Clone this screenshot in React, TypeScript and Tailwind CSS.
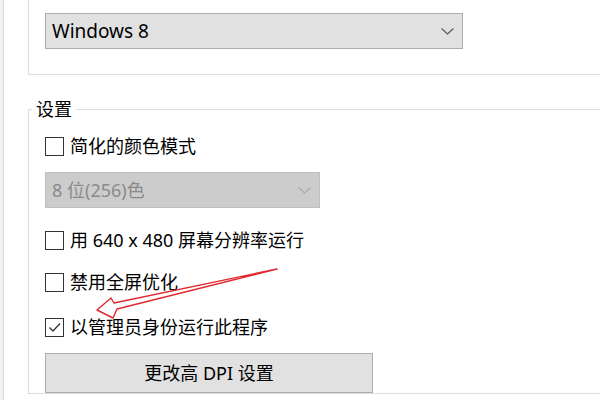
import React from "react"

const font = "font-['Noto_Sans','Noto_Sans_CJK_SC',sans-serif]"

function Checkbox({ checked = false }: { checked?: boolean }) {
  return (
    <span className="flex h-[19px] w-[19px] flex-shrink-0 items-center justify-center border border-[#333333] bg-white">
      {checked && (
        <svg width="17" height="17" viewBox="0 0 17 17">
          <polyline points="3.5,8.5 7,12 14,4.5" fill="none" stroke="#333333" strokeWidth="1.3" />
        </svg>
      )}
    </span>
  )
}

function Chevron({ color }: { color: string }) {
  return (
    <svg width="13" height="7" viewBox="0 0 13 7">
      <polyline points="0.5,0.5 6.5,6 12.5,0.5" fill="none" stroke={color} strokeWidth="1.1" />
    </svg>
  )
}

function CheckRow({ label, checked, className }: { label: string; checked?: boolean; className: string }) {
  return (
    <div className={`flex h-[24px] items-center gap-[6px] ${className}`}>
      <Checkbox checked={checked} />
      <span className="leading-[24px]">{label}</span>
    </div>
  )
}

export default function App() {
  return (
    <div className={`relative h-[400px] w-[600px] overflow-hidden bg-white text-[18px] text-black ${font}`}>
      <div className="flex h-full">
        <div className="w-[3px] flex-shrink-0 bg-[#f2f2f2]" />
        <div className="w-px flex-shrink-0 bg-[#dadada]" />

        <div className="min-w-0 flex-1 pl-[24px]">
          {/* Compatibility mode group (top is cut off) */}
          <div className="mt-[-30px] w-[700px] border border-[#dcdcdc] pl-[16px] pt-[6px] pb-[25px]">
            <div className="flex h-[24px] items-center gap-[6px]">
              <Checkbox checked />
              <span className="leading-[24px]">以兼容模式运行这个程序:</span>
            </div>
            <div className="mt-[12px] flex h-[36px] w-[418px] items-center justify-between border border-[#adadad] bg-[#e1e1e1] pl-[6px] pr-[8px]">
              <span className="text-[19px] leading-none">Windows 8</span>
              <Chevron color="#555555" />
            </div>
          </div>

          {/* Settings group */}
          <fieldset className="mt-[22px] w-[700px] border border-[#dcdcdc] pl-[16px]">
            <legend className="ml-[-13px] px-[4px] leading-[24px]">设置</legend>

            <CheckRow label="简化的颜色模式" className="mt-[13px]" />

            <div className="mt-[14px] flex h-[36px] w-[275px] items-center justify-between border border-[#bfbfbf] bg-[#cccccc] pl-[6px] pr-[8px] text-[#8a8a8a]">
              <span className="leading-none">8 位(256)色</span>
              <Chevron color="#a8a8a8" />
            </div>

            <CheckRow label="用 640 x 480 屏幕分辨率运行" className="mt-[20px]" />
            <CheckRow label="禁用全屏优化" className="mt-[18px]" />
            <CheckRow label="以管理员身份运行此程序" checked className="mt-[21px]" />

            <button className="mt-[14px] flex h-[40px] w-[328px] items-center justify-center border border-[#adadad] bg-[#e1e1e1] leading-none">
              更改高 DPI 设置
            </button>
          </fieldset>
        </div>
      </div>

      {/* Red annotation arrow */}
      <svg className="pointer-events-none absolute left-0 top-0" width="600" height="400" viewBox="0 0 600 400">
        <polygon
          points="97,310 111,298 114,303 277,269 117,309 113,318"
          fill="none"
          stroke="#e0282e"
          strokeWidth="1.4"
          strokeLinejoin="round"
        />
      </svg>
    </div>
  )
}
